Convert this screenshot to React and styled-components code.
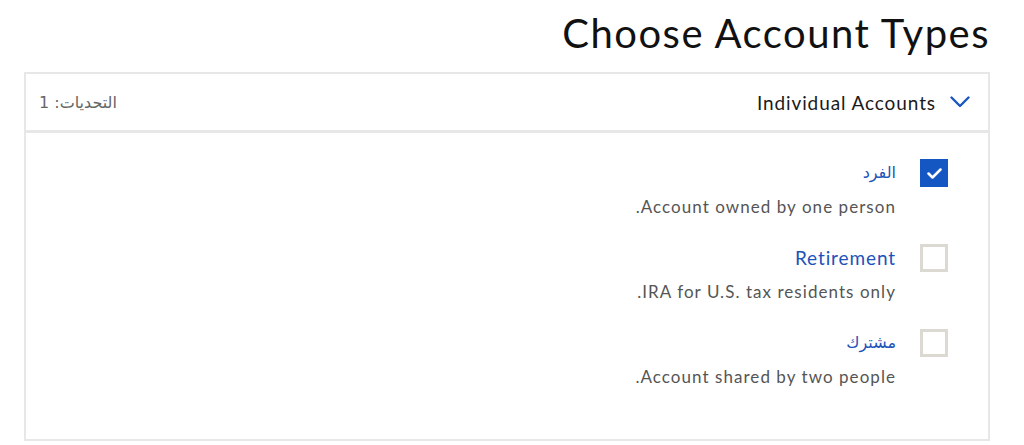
import React from "react";
import styled, { createGlobalStyle } from "styled-components";

const Global = createGlobalStyle`
  html, body { margin: 0; padding: 0; background: #fff; }
  body { font-family: Lato, "Liberation Sans", Arial, sans-serif; }
`;

const Page = styled.div`
  padding: 10px 34px 0 24px;
`;

const Title = styled.h1`
  margin: 0 0 15px;
  font-family: Lato, "Liberation Sans", sans-serif;
  font-weight: 400;
  font-size: 40px;
  line-height: 47px;
  color: #111;
  letter-spacing: 1.5px;
`;

const Card = styled.section`
  border: 2px solid #e7e7e7;
  background: #fff;
`;

const CardHeader = styled.div`
  display: flex;
  align-items: center;
  justify-content: space-between;
  box-sizing: border-box;
  height: 59px;
  padding: 0 18px 0 13px;
  border-bottom: 3px solid #e7e7e7;
`;

const Group = styled.button`
  display: flex;
  align-items: center;
  gap: 14px;
  border: 0;
  background: none;
  padding: 0;
  font-family: Lato, "Liberation Sans", sans-serif;
  font-size: 19px;
  letter-spacing: 0.9px;
  color: #1a1a1a;
  cursor: pointer;
`;

const Count = styled.span`
  font-family: "DejaVu Sans", "Liberation Sans", Arial, sans-serif;
  font-size: 16px;
  color: #666;
`;

const List = styled.div`
  display: flex;
  flex-direction: column;
  gap: 27px;
  padding: 26px 40px 52px;
`;

const Option = styled.label`
  display: flex;
  align-items: flex-start;
  gap: 24px;
  cursor: pointer;
`;

const Box = styled.span`
  flex: none;
  width: 28px;
  height: 28px;
  box-sizing: border-box;
  display: flex;
  align-items: center;
  justify-content: center;
  background: ${(p) => (p.$checked ? "#1456c2" : "#fff")};
  border: ${(p) => (p.$checked ? "none" : "3px solid #dcd8d2")};
`;

const TextCol = styled.div`
  display: flex;
  flex-direction: column;
  gap: 9px;
`;

const Label = styled.span`
  font-family: Lato, "Liberation Sans", sans-serif;
  font-size: 19px;
  line-height: 28px;
  letter-spacing: 0.9px;
  color: #1d53b8;
  &:lang(ar) {
    font-family: "DejaVu Sans", sans-serif;
    font-size: 16px;
    letter-spacing: 0;
  }
`;

const Desc = styled.span`
  font-family: Lato, "Liberation Sans", sans-serif;
  font-size: 17px;
  line-height: 21px;
  color: #555;
  letter-spacing: 1.05px;
`;

const Chevron = () => (
  <svg width="20" height="12" viewBox="0 0 20 12" fill="none">
    <path d="M1.5 1.5 L10 10 L18.5 1.5" stroke="#1a56c0" strokeWidth="2.4" strokeLinecap="round" strokeLinejoin="round" />
  </svg>
);

const Check = () => (
  <svg width="15" height="11" viewBox="0 0 15 11" fill="none">
    <path d="M1.5 5.5 L5.5 9.5 L13.5 1.5" stroke="#fff" strokeWidth="2.5" strokeLinecap="round" strokeLinejoin="round" />
  </svg>
);

const options = [
  { label: "الفرد", lang: "ar", desc: "Account owned by one person.", checked: true },
  { label: "Retirement", lang: "en", desc: "IRA for U.S. tax residents only.", checked: false },
  { label: "مشترك", lang: "ar", desc: "Account shared by two people.", checked: false },
];

export default function App() {
  return (
    <Page dir="rtl">
      <Global />
      <Title>Choose Account Types</Title>
      <Card>
        <CardHeader>
          <Group type="button">
            <Chevron />
            <span>Individual Accounts</span>
          </Group>
          <Count>التحديات: 1</Count>
        </CardHeader>
        <List>
          {options.map((o) => (
            <Option key={o.label}>
              <Box $checked={o.checked}>{o.checked && <Check />}</Box>
              <TextCol>
                <Label lang={o.lang}>{o.label}</Label>
                <Desc>{o.desc}</Desc>
              </TextCol>
            </Option>
          ))}
        </List>
      </Card>
    </Page>
  );
}
